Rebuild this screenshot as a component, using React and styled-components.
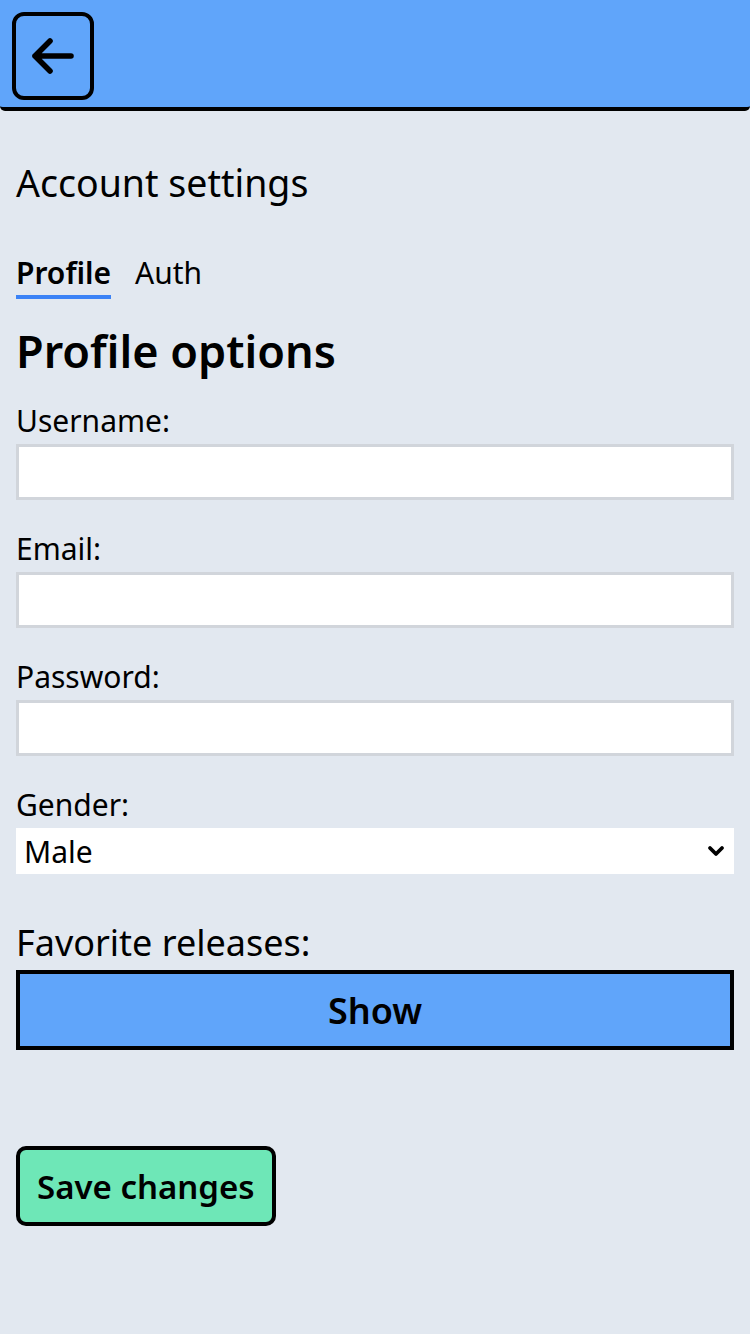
import React from "react";
import styled, { createGlobalStyle } from "styled-components";

const Global = createGlobalStyle`
  html, body { margin: 0; padding: 0; background: #e2e8f0; }
  body { font-family: "Noto Sans", "Open Sans", sans-serif; color: #000; }
  * { box-sizing: border-box; }
`;

const Page = styled.div`
  min-height: 1334px;
  background: #e2e8f0;
  display: flex;
  flex-direction: column;
`;

const Header = styled.header`
  height: 111px;
  background: #60a5fa;
  border-bottom: 4px solid #000;
  border-radius: 0 0 5px 5px;
  padding: 12px;
  display: flex;
  align-items: flex-start;
`;

const BackButton = styled.button`
  width: 82px;
  height: 88px;
  border: 4px solid #000;
  border-radius: 12px;
  background: transparent;
  display: flex;
  align-items: center;
  justify-content: center;
  padding: 0;
  cursor: pointer;
`;

const Main = styled.main`
  padding: 45px 16px 0;
  display: flex;
  flex-direction: column;
`;

const Title = styled.h1`
  margin: 0;
  font-size: 37.5px;
  font-weight: 400;
  line-height: 54px;
`;

const Tabs = styled.nav`
  display: flex;
  gap: 24px;
  margin-top: 40px;
`;

const Tab = styled.button`
  border: none;
  background: none;
  padding: 0;
  font-family: inherit;
  font-size: 30px;
  line-height: 45px;
  font-weight: ${(p) => (p.$active ? 600 : 400)};
  color: #000;
  border-bottom: 4px solid ${(p) => (p.$active ? "#3b82f6" : "transparent")};
`;

const SectionTitle = styled.h2`
  margin: 22px 0 0;
  font-size: 45px;
  font-weight: 600;
  line-height: 60px;
`;

const Field = styled.div`
  display: flex;
  flex-direction: column;
  margin-top: ${(p) => p.$mt ?? 26}px;
`;

const Label = styled.label`
  font-size: ${(p) => p.$size || 30}px;
  line-height: ${(p) => (p.$size ? p.$size * 1.5 : 46)}px;
`;

const Input = styled.input`
  height: 56px;
  width: 100%;
  border: 3px solid #d1d5db;
  background: #fff;
  font-size: 30px;
  font-family: inherit;
  padding: 0 10px;
  outline: none;
`;

const SelectWrap = styled.div`
  position: relative;
  height: 46px;
`;

const Select = styled.select`
  appearance: none;
  width: 100%;
  height: 46px;
  border: none;
  background: #fff;
  font-family: inherit;
  font-size: 30px;
  padding: 0 8px;
  color: #000;
  outline: none;
`;

const Chevron = styled.svg`
  position: absolute;
  right: 9px;
  top: 16px;
  pointer-events: none;
`;

const ShowButton = styled.button`
  width: 100%;
  height: 80px;
  border: 4px solid #000;
  background: #60a5fa;
  font-family: inherit;
  font-size: 36px;
  font-weight: 600;
  color: #000;
`;

const SaveButton = styled.button`
  align-self: flex-start;
  margin-top: 96px;
  height: 80px;
  padding: 0 17px;
  border: 4px solid #000;
  border-radius: 10px;
  background: #6ee7b7;
  font-family: inherit;
  font-size: 33px;
  font-weight: 600;
  color: #000;
`;

export default function App() {
  return (
    <Page>
      <Global />
      <Header>
        <BackButton aria-label="Back">
          <svg width="48" height="48" viewBox="0 0 24 24" fill="none" stroke="#000" strokeWidth="2.8" strokeLinecap="round" strokeLinejoin="round">
            <path d="M10.5 19.5 3 12m0 0 7.5-7.5M3 12h18" />
          </svg>
        </BackButton>
      </Header>
      <Main>
        <Title>Account settings</Title>
        <Tabs>
          <Tab $active>Profile</Tab>
          <Tab>Auth</Tab>
        </Tabs>
        <SectionTitle>Profile options</SectionTitle>
        <Field $mt={17}>
          <Label>Username:</Label>
          <Input type="text" />
        </Field>
        <Field>
          <Label>Email:</Label>
          <Input type="email" />
        </Field>
        <Field>
          <Label>Password:</Label>
          <Input type="password" />
        </Field>
        <Field>
          <Label>Gender:</Label>
          <SelectWrap>
            <Select defaultValue="male">
              <option value="male">Male</option>
              <option value="female">Female</option>
            </Select>
            <Chevron width="18" height="14" viewBox="0 0 18 14" fill="none" stroke="#000" strokeWidth="3.8" strokeLinecap="round" strokeLinejoin="round">
              <path d="M3 4l6 6 6-6" />
            </Chevron>
          </SelectWrap>
        </Field>
        <Field $mt={42}>
          <Label $size={36}>Favorite releases:</Label>
          <ShowButton>Show</ShowButton>
        </Field>
        <SaveButton>Save changes</SaveButton>
      </Main>
    </Page>
  );
}
